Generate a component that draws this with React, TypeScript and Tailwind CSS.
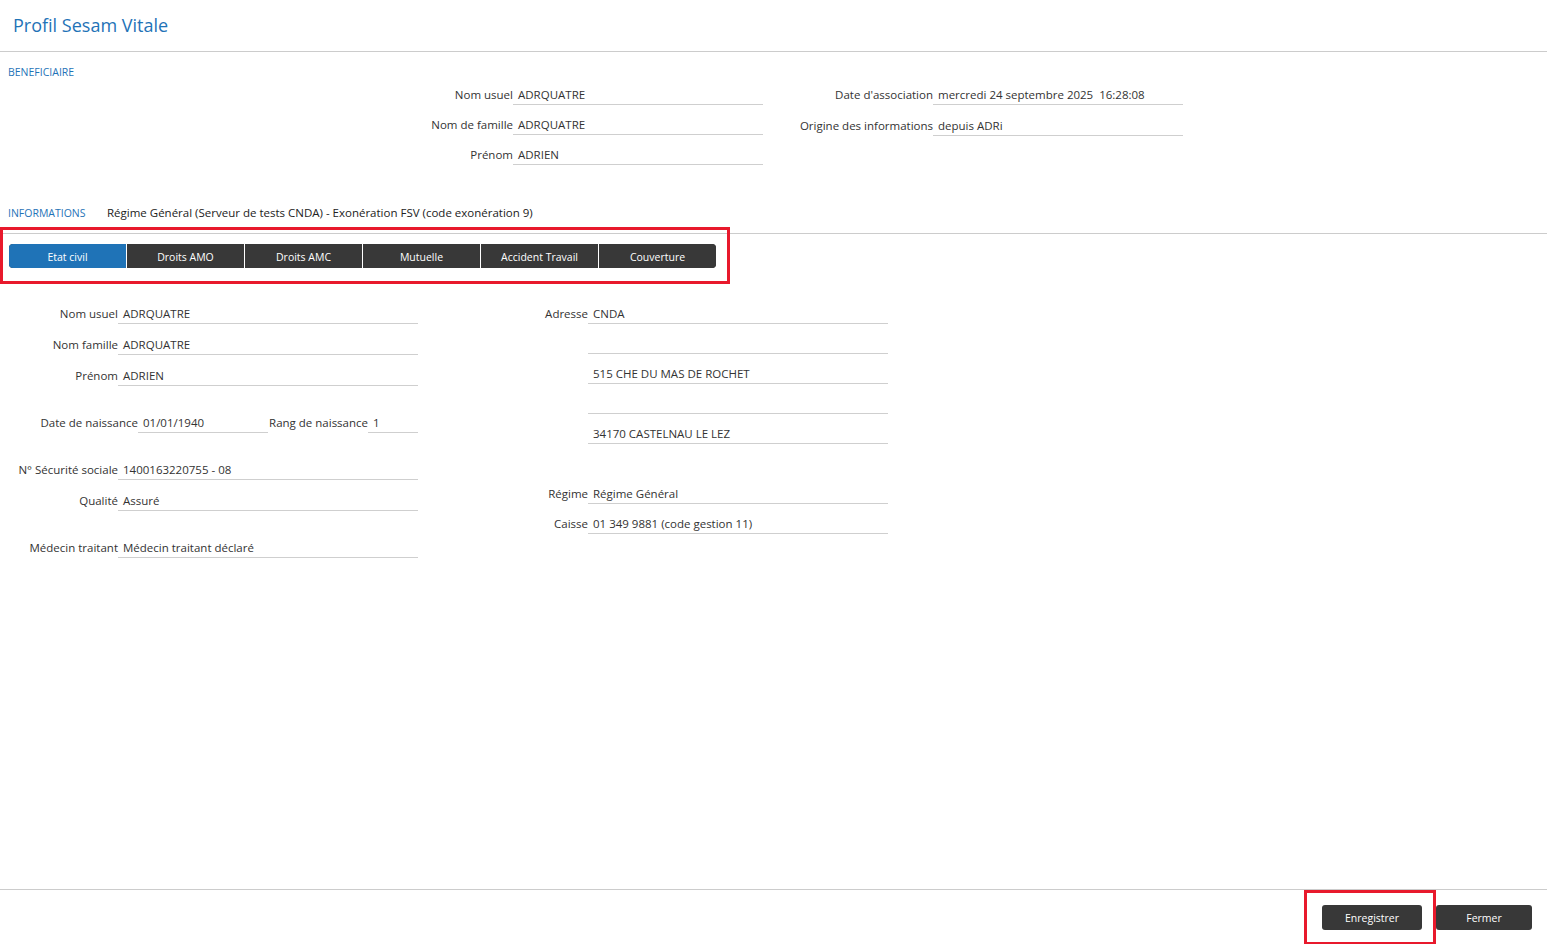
import React from "react";

const font = { fontFamily: '"Segoe UI", "Open Sans", "Noto Sans", sans-serif' };

type FieldProps = {
  label?: string;
  value?: string;
  labelW: string;
  fieldW: string;
};

function Field({ label, value, labelW, fieldW }: FieldProps) {
  return (
    <div className="flex h-[21px]">
      <div className={`${labelW} h-[21px] pt-[3px] text-right text-[11.5px] text-[#333] leading-[16px] whitespace-nowrap`}>
        {label}
      </div>
      <div
        className={`${fieldW} h-[21px] pt-[3px] border-b border-[#cfcfcf] pl-[5px] text-[11.5px] text-[#333] leading-[16px] whitespace-pre`}
      >
        {value}
      </div>
    </div>
  );
}

const tabs = ["Etat civil", "Droits AMO", "Droits AMC", "Mutuelle", "Accident Travail", "Couverture"];

export default function App() {
  return (
    <div className="h-screen flex flex-col bg-white overflow-hidden" style={font}>
      {/* Header */}
      <div className="h-[52px] shrink-0 border-b border-[#cccccc] flex items-center pl-[13px] pb-[2px]">
        <h1 className="text-[18px] text-[#1f73b7] leading-none">Profil Sesam Vitale</h1>
      </div>

      <div className="flex-1">
        {/* Beneficiaire */}
        <div className="mt-[14px] h-[12px] pl-[8px] text-[10.5px] text-[#1f73b7] leading-[12px]">BENEFICIAIRE</div>
        <div className="flex mt-[6px]">
          <div className="flex flex-col gap-[9px]">
            <Field label="Nom usuel" value="ADRQUATRE" labelW="w-[513px]" fieldW="w-[250px]" />
            <Field label="Nom de famille" value="ADRQUATRE" labelW="w-[513px]" fieldW="w-[250px]" />
            <Field label="Prénom" value="ADRIEN" labelW="w-[513px]" fieldW="w-[250px]" />
          </div>
          <div className="flex flex-col gap-[10px]">
            <Field
              label="Date d'association"
              value="mercredi 24 septembre 2025  16:28:08"
              labelW="w-[170px]"
              fieldW="w-[250px]"
            />
            <Field label="Origine des informations" value="depuis ADRi" labelW="w-[170px]" fieldW="w-[250px]" />
          </div>
        </div>

        {/* Informations */}
        <div className="flex items-center mt-[40px] h-[16px]">
          <span className="pl-[8px] pt-[2px] w-[107px] text-[10.5px] text-[#1f73b7]">INFORMATIONS</span>
          <span className="text-[11.5px] text-[#222] whitespace-pre">
            Régime Général (Serveur de tests CNDA) - Exonération FSV (code exonération 9)
          </span>
        </div>

        <div className="relative mt-[12px]">
          <div className="border-t border-[#cccccc]" />
          <div className="pt-[10px] pl-[9px]">
            <div className="flex w-[707px] h-[24px] rounded-[4px] overflow-hidden bg-[#383838]">
              {tabs.map((t, i) => (
                <div
                  key={t}
                  className={`flex-1 flex items-center justify-center pt-[3px] text-[10.5px] text-white ${
                    i === 0 ? "bg-[#1f73b7]" : "bg-[#383838]"
                  } ${i > 0 ? "border-l border-white" : ""}`}
                >
                  {t}
                </div>
              ))}
            </div>
          </div>
          <div className="absolute left-0 top-[-6px] w-[730px] h-[57px] border-[3px] border-[#e8192c] pointer-events-none" />
        </div>

        {/* Etat civil */}
        <div className="flex pt-[35px]">
          <div className="flex flex-col">
            <div className="flex flex-col gap-[10px]">
              <Field label="Nom usuel" value="ADRQUATRE" labelW="w-[118px]" fieldW="w-[300px]" />
              <Field label="Nom famille" value="ADRQUATRE" labelW="w-[118px]" fieldW="w-[300px]" />
              <Field label="Prénom" value="ADRIEN" labelW="w-[118px]" fieldW="w-[300px]" />
            </div>
            <div className="flex mt-[26px]">
              <Field label="Date de naissance" value="01/01/1940" labelW="w-[138px]" fieldW="w-[130px]" />
              <Field label="Rang de naissance" value="1" labelW="w-[100px]" fieldW="w-[50px]" />
            </div>
            <div className="flex flex-col gap-[10px] mt-[26px]">
              <Field label="N° Sécurité sociale" value="1400163220755 - 08" labelW="w-[118px]" fieldW="w-[300px]" />
              <Field label="Qualité" value="Assuré" labelW="w-[118px]" fieldW="w-[300px]" />
            </div>
            <div className="mt-[26px]">
              <Field label="Médecin traitant" value="Médecin traitant déclaré" labelW="w-[118px]" fieldW="w-[300px]" />
            </div>
          </div>

          <div className="flex flex-col">
            <div className="flex flex-col gap-[9px]">
              <Field label="Adresse" value="CNDA" labelW="w-[170px]" fieldW="w-[300px]" />
              <Field labelW="w-[170px]" fieldW="w-[300px]" />
              <Field value="515 CHE DU MAS DE ROCHET" labelW="w-[170px]" fieldW="w-[300px]" />
              <Field labelW="w-[170px]" fieldW="w-[300px]" />
              <Field value="34170 CASTELNAU LE LEZ" labelW="w-[170px]" fieldW="w-[300px]" />
            </div>
            <div className="flex flex-col gap-[9px] mt-[39px]">
              <Field label="Régime" value="Régime Général" labelW="w-[170px]" fieldW="w-[300px]" />
              <Field label="Caisse" value="01 349 9881 (code gestion 11)" labelW="w-[170px]" fieldW="w-[300px]" />
            </div>
          </div>
        </div>
      </div>

      {/* Footer */}
      <div className="h-[55px] shrink-0 border-t border-[#cccccc] flex justify-end items-start pt-[15px] pr-[15px] gap-[14px]">
        <div className="relative">
          <button className="block w-[100px] h-[25px] pt-[2px] rounded-[3px] bg-[#383838] text-white text-[10.5px]">
            Enregistrer
          </button>
          <div className="absolute left-[-18px] top-[-15px] w-[132px] h-[55px] border-[3px] border-[#e8192c] pointer-events-none" />
        </div>
        <button className="block w-[96px] h-[25px] pt-[2px] rounded-[3px] bg-[#383838] text-white text-[10.5px]">
          Fermer
        </button>
      </div>
    </div>
  );
}
